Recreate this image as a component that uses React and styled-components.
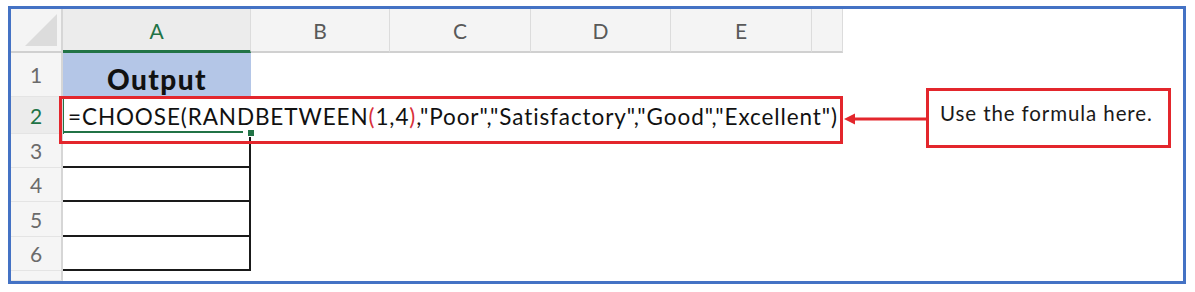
import React from "react";
import styled, { createGlobalStyle, css } from "styled-components";

const GlobalStyle = createGlobalStyle`
  html, body {
    margin: 0;
    padding: 0;
    background: #ffffff;
  }
  body {
    font-family: Lato, "Open Sans", "Liberation Sans", sans-serif;
  }
`;

const Frame = styled.div`
  box-sizing: border-box;
  width: 1178px;
  height: 278px;
  margin: 6px 0 0 8px;
  border: 3px solid #4472c4;
  display: flex;
  align-items: flex-start;
  overflow: hidden;
`;

const Sheet = styled.div`
  position: relative;
  display: grid;
  grid-template-columns: 52px 188px 139px 141px 140px 141px 31px;
  grid-template-rows: 44px 44px 37px 34px 34px 35px 34px 10px;
  width: 832px;
  flex-shrink: 0;
`;

const Corner = styled.div`
  position: relative;
  background: #f4f4f4;
  border-right: 2px solid #d6d6d6;
  border-bottom: 2px solid #d0d0d0;
  box-sizing: border-box;

  &::after {
    content: "";
    position: absolute;
    left: 14px;
    top: 5px;
    width: 32px;
    height: 32px;
    background: #dcdcdc;
    clip-path: polygon(100% 0, 100% 100%, 0 100%);
  }
`;

const ColHead = styled.div`
  box-sizing: border-box;
  display: flex;
  align-items: center;
  justify-content: center;
  background: ${(p) => (p.$active ? "#ececec" : "#f4f4f4")};
  border-right: 1px solid #dcdcdc;
  border-bottom: ${(p) => (p.$active ? "3px solid #217346" : "2px solid #d0d0d0")};
  color: ${(p) => (p.$active ? "#217346" : "#595959")};
  font-size: 21px;
  padding-top: ${(p) => (p.$active ? "1px" : "0")};

  &:last-child {
    border-right: none;
  }
`;

const RowHead = styled.div`
  box-sizing: border-box;
  display: flex;
  align-items: center;
  justify-content: center;
  background: ${(p) => (p.$active ? "#ececec" : "#f5f5f5")};
  border-right: 2px solid #d6d6d6;
  border-bottom: 1px solid #e4e4e4;
  color: ${(p) => (p.$active ? "#217346" : "#6b6b6b")};
  font-size: 21px;
`;

const Cell = styled.div`
  box-sizing: border-box;
  position: relative;
  background: #ffffff;
  ${(p) =>
    p.$header &&
    css`
      background: #b4c6e7;
      display: flex;
      align-items: center;
      justify-content: center;
      font-weight: 900;
      font-size: 28px;
      letter-spacing: 1.4px;
      color: #111111;
      padding-top: 7px;
    `}
  ${(p) =>
    p.$boxed &&
    css`
      border-right: 2px solid #1a1a1a;
      border-bottom: 2px solid #1a1a1a;
    `}
`;

const SelectedCell = styled.div`
  box-sizing: border-box;
  position: relative;
  background: #ffffff;
  border-left: 1px solid #217346;
  display: flex;
  align-items: center;
  z-index: 1;

  &::after {
    content: "";
    position: absolute;
    left: 0;
    right: 8px;
    bottom: 1px;
    height: 2px;
    background: #217346;
  }
`;

const FillHandle = styled.span`
  position: absolute;
  right: -4px;
  bottom: -3px;
  width: 6px;
  height: 6px;
  background: #217346;
  border: 1px solid #ffffff;
`;

const Formula = styled.span`
  position: absolute;
  left: 4px;
  top: 50%;
  transform: translateY(-50%);
  white-space: nowrap;
  font-size: 22.5px;
  letter-spacing: 0.9px;
  color: #111111;
`;

const Paren = styled.span`
  color: #d9303b;
`;

const Highlight = styled.div`
  position: absolute;
  left: 48px;
  top: 87px;
  width: 784px;
  height: 48px;
  box-sizing: border-box;
  border: 3px solid #e3262c;
  pointer-events: none;
  z-index: 2;
`;

const Arrow = styled.svg`
  flex-shrink: 0;
  margin-top: 102px;
  display: block;
`;

const Callout = styled.div`
  box-sizing: border-box;
  flex-shrink: 0;
  width: 245px;
  height: 60px;
  margin-top: 79px;
  border: 3px solid #e3262c;
  padding: 10px 0 0 11px;
  font-size: 20.5px;
  letter-spacing: 0.9px;
  color: #1a1a1a;
`;

const columns = ["A", "B", "C", "D", "E", ""];

export default function App() {
  return (
    <>
      <GlobalStyle />
      <Frame>
        <Sheet>
          <Corner />
          {columns.map((c, i) => (
            <ColHead key={i} $active={c === "A"}>
              {c}
            </ColHead>
          ))}

          <RowHead>1</RowHead>
          <Cell $header>Output</Cell>
          <Cell />
          <Cell />
          <Cell />
          <Cell />
          <Cell />

          <RowHead $active>2</RowHead>
          <SelectedCell>
            <Formula>
              =CHOOSE(RANDBETWEEN<Paren>(</Paren>1,4<Paren>)</Paren>,"Poor","Satisfactory","Good","Excellent")
            </Formula>
            <FillHandle />
          </SelectedCell>
          <Cell />
          <Cell />
          <Cell />
          <Cell />
          <Cell />

          {[3, 4, 5, 6].map((n) => (
            <React.Fragment key={n}>
              <RowHead>{n}</RowHead>
              <Cell $boxed />
              <Cell />
              <Cell />
              <Cell />
              <Cell />
              <Cell />
            </React.Fragment>
          ))}

          <RowHead />
          <Cell />
          <Cell />
          <Cell />
          <Cell />
          <Cell />
          <Cell />

          <Highlight />
        </Sheet>

        <Arrow width="83" height="16" viewBox="0 0 83 16">
          <line x1="8" y1="8" x2="83" y2="8" stroke="#e3262c" strokeWidth="3" />
          <polygon points="1,8 12,2.5 12,13.5" fill="#e3262c" />
        </Arrow>

        <Callout>Use the formula here.</Callout>
      </Frame>
    </>
  );
}
